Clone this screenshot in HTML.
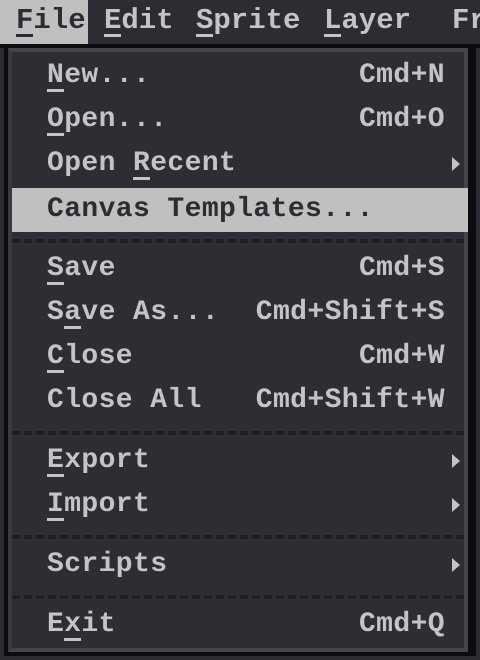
<!DOCTYPE html><html><head><style>
body{margin:0;width:480px;height:660px;background:#2d2c33;overflow:hidden;font-family:"Liberation Mono",monospace;color:#c4c4c4;position:relative;font-weight:bold}
.bar{position:absolute;left:0;top:0;width:480px;height:44px;background:#2d2c33;font-size:29px;line-height:42px}
.bar span{position:absolute;top:0}
.bar .f{left:0;width:88px;height:44px;background:#c0c0c0;color:#2d2c33;padding-left:16px;box-sizing:border-box}
.line{position:absolute;left:0;top:44px;width:480px;height:4px;background:#0c0c10}
.menu{position:absolute;left:4px;top:48px;width:472px;height:608px;background:#0c0c10}
.inner{position:absolute;left:4px;top:0;width:460px;height:604px;background:#2e2d33;border-top:4px solid #45444b;border-right:4px solid #45444b;border-bottom:4px solid #45444b;border-left:4px solid #3a3940;box-sizing:border-box}
.row{position:absolute;left:12px;width:456px;height:44px;font-size:28px;line-height:44px;letter-spacing:0.4px}
.row .l{position:absolute;left:35px}
.row .r{position:absolute;right:23px}
.row .a{position:absolute;right:8px;top:15px;width:0;height:0;border-left:8px solid #c4c4c4;border-top:7px solid transparent;border-bottom:7px solid transparent}
.hl{background:#c0c0c0;color:#2d2c33}
.sep{position:absolute;left:12px;width:453px;height:4px;background:repeating-linear-gradient(90deg,#1f1e24 0 8px,transparent 8px 12px)}
u{text-decoration:none;display:inline-block;line-height:27px;border-bottom:3px solid currentColor}
</style></head><body>
<div class="bar"><span class="f"><u>F</u>ile</span><span style="left:104px"><u>E</u>dit</span><span style="left:196px"><u>S</u>prite</span><span style="left:324px"><u>L</u>ayer</span><span style="left:452px">Fr</span></div>
<div class="line"></div>
<div class="menu"><div class="inner"></div></div>
<div class="row" style="top:54px"><span class="l"><u>N</u>ew...</span><span class="r">Cmd+N</span></div>
<div class="row" style="top:98px"><span class="l"><u>O</u>pen...</span><span class="r">Cmd+O</span></div>
<div class="row" style="top:142px"><span class="l">Open <u>R</u>ecent</span><span class="a"></span></div>
<div class="row hl" style="top:188px"><span class="l">Canvas Templates...</span></div>
<div class="sep" style="top:239px"></div>
<div class="row" style="top:247px"><span class="l"><u>S</u>ave</span><span class="r">Cmd+S</span></div>
<div class="row" style="top:291px"><span class="l">S<u>a</u>ve As...</span><span class="r">Cmd+Shift+S</span></div>
<div class="row" style="top:335px"><span class="l"><u>C</u>lose</span><span class="r">Cmd+W</span></div>
<div class="row" style="top:379px"><span class="l">Close All</span><span class="r">Cmd+Shift+W</span></div>
<div class="sep" style="top:431px"></div>
<div class="row" style="top:439px"><span class="l"><u>E</u>xport</span><span class="a"></span></div>
<div class="row" style="top:483px"><span class="l"><u>I</u>mport</span><span class="a"></span></div>
<div class="sep" style="top:535px"></div>
<div class="row" style="top:543px"><span class="l">Scripts</span><span class="a"></span></div>
<div class="sep" style="top:595px"></div>
<div class="row" style="top:603px"><span class="l">E<u>x</u>it</span><span class="r">Cmd+Q</span></div>
</body></html>
